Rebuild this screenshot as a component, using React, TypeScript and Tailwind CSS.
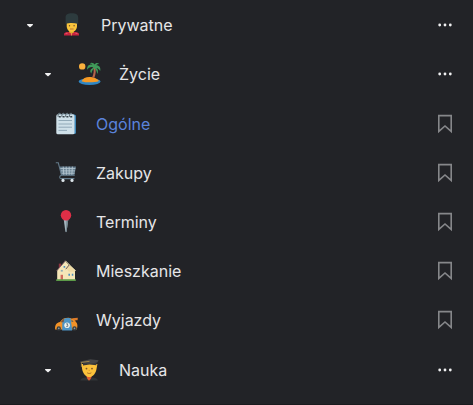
import { useState } from "react";
import type { ReactNode } from "react";

const GuardIcon = () => (
  <svg viewBox="0 0 24 24" className="h-6 w-6 shrink-0" aria-hidden="true">
    <path d="M5 22.5V21.2C5 19.6 7.5 18.8 12.3 18.8S20 19.6 20 21.2V22.5Z" fill="#c9243f" />
    <path d="M10.2 17H14.8V19.4L12.5 20.8L10.2 19.4Z" fill="#e0ac2c" />
    <path d="M7.7 9H18V13C18 16.4 15.8 18.9 12.8 18.9S7.7 16.4 7.7 13Z" fill="#f9c43c" />
    <path d="M6.6 11V4.6C6.6 1.4 8.8.2 12.8.2S19.2 1.4 19.2 4.6V11C17 10.2 15 9.9 12.8 9.9S8.2 10.2 6.6 11Z" fill="#2d3b3e" />
    <circle cx="10.5" cy="12.7" r=".7" fill="#6b4a2a" />
    <circle cx="15.1" cy="12.7" r=".7" fill="#6b4a2a" />
    <path d="M11 16H14.6" stroke="#a8663a" strokeWidth=".8" />
    <path d="M12.5 20.2V22.5" stroke="#e9b04a" strokeWidth=".8" />
    <path d="M6.5 20.4H8.5M16.5 20.4H18.5" stroke="#ec7180" strokeWidth=".7" />
  </svg>
);

const IslandIcon = () => (
  <svg viewBox="0 0 24 24" className="h-6 w-6 shrink-0" aria-hidden="true">
    <circle cx="5.2" cy="4.4" r="3.2" fill="#fbb03d" />
    <ellipse cx="12.6" cy="19.6" rx="11" ry="3.4" fill="#2f86c4" />
    <path d="M4.5 19.2C6 16.2 9 14.7 13 14.9C17.2 15 20.6 16.5 22 18.9C17 20.7 9.5 20.9 4.5 19.2Z" fill="#f79a24" />
    <path d="M15.1 15.5C16.8 12 17.2 8.4 16.2 5L18 4.6C19.3 8.6 18.8 12.2 17.4 15.7Z" fill="#b5654a" />
    <path d="M16.9 5.6C14.5 4.2 12 4.8 10.2 7.8C9.6 4 12.2 1.8 15.4 2.6C14.6 1.7 13.6 1.3 12.6 1.2C15 .1 16.8.8 17.5 2.6C18.6.5 20.9.5 22.2 2.1C20.8 2 19.8 2.4 19.2 3.2C22.3 3.2 24 5.5 23.2 8.9C22.1 7.2 20.9 6.4 19.4 6.1C21.2 7.8 21.5 10 20.2 12C19.9 9.2 18.9 7.4 17.4 6.3C16 7.4 14.9 8.8 14.3 11.6C12.3 9.2 13.4 6.9 16.9 5.6Z" fill="#3f9a59" />
  </svg>
);

const NotepadIcon = () => (
  <svg viewBox="0 0 24 24" className="h-6 w-6 shrink-0" aria-hidden="true">
    <rect x="4" y="2.5" width="18" height="19.5" rx="1.6" fill="#3f87b6" />
    <rect x="2.3" y="2.3" width="18.2" height="20" rx="1.6" fill="#cfe0e9" />
    <path d="M4.5 8.5H18M4.5 12H18M4.5 15.2H18M4.5 18.4H13" stroke="#8aa3b2" strokeWidth=".9" />
    <path
      d="M4.2 4.8C3.4 2 5.6.2 6.4 2M8 4.8C7.2 2 9.4.2 10.2 2M11.8 4.8C11 2 13.2.2 14 2M15.6 4.8C14.8 2 17 .2 17.8 2"
      fill="none"
      stroke="#65757e"
      strokeWidth="1.1"
    />
    <path d="M4.8 4.7H6.8M8.6 4.7H10.6M12.4 4.7H14.4M16.2 4.7H18.2" stroke="#3b474e" strokeWidth="1.4" />
  </svg>
);

const CartIcon = () => (
  <svg viewBox="0 0 24 24" className="h-6 w-6 shrink-0" aria-hidden="true">
    <path d="M5.4 5.5H22L20.4 14.2H7.2Z" fill="#627a8c" />
    <path
      d="M6 7.6H21.4M6.5 9.9H21M7 12.2H20.6M9.2 5.6L9.8 14M12.2 5.6L12.4 14M15.2 5.6V14M18.4 5.6L17.8 14"
      stroke="#b6c6d1"
      strokeWidth=".9"
    />
    <path
      d="M2.2 1.8H4.3L7.5 14.3H20.3M7.5 14.3C5.2 14.9 5 17.4 7.2 17.6H20"
      fill="none"
      stroke="#647b8b"
      strokeWidth="1.1"
      strokeLinecap="round"
    />
    <circle cx="9" cy="19.4" r="1.6" fill="#dbe4e9" />
    <circle cx="18" cy="19.4" r="1.6" fill="#dbe4e9" />
  </svg>
);

const PinIcon = () => (
  <svg viewBox="0 0 24 24" className="h-6 w-6 shrink-0" aria-hidden="true">
    <path d="M9.7 9.5H14.3L12.6 21.4L12 22.2L11.4 21.4Z" fill="#a3b4bd" />
    <path d="M12.5 9.5H14.3L12.6 21.4L12 22.2Z" fill="#71848c" />
    <circle cx="12" cy="5.2" r="5.2" fill="#df2f47" />
  </svg>
);

const HouseIcon = () => (
  <svg viewBox="0 0 24 24" className="h-6 w-6 shrink-0" aria-hidden="true">
    <rect x="4.8" y="4.6" width="2.2" height="5" fill="#8e3540" />
    <path d="M3.2 11.4L11.2 2.2L15.4 6.4L21 11V21H3.2Z" fill="#f5e6b8" />
    <path d="M15.4 6.2L21.4 11.6L20.8 12.8H14.8L12.6 9.8Z" fill="#efdaa4" />
    <path d="M2.6 11.9L11.4 1.8" fill="none" stroke="#84606a" strokeWidth=".8" />
    <path d="M15.2 5.9L11.8 10.2" fill="none" stroke="#6f5a58" strokeWidth="1" />
    <path d="M11.4 1.8L21.6 12" stroke="#efe3b4" strokeWidth="1" />
    <path d="M6.6 15.8H9V21H6.6Z" fill="#cf6a5c" />
    <path d="M9.6 7H11.2V8.8H9.6ZM14.4 14.8H16V16.8H14.4ZM17.8 14.8H19.3V16.8H17.8Z" fill="#4d8fbd" />
    <path d="M6.8 10.9H8.8V12.6H6.8Z" fill="#8cabb4" />
    <rect x="2" y="20.2" width="20" height="1.9" rx=".8" fill="#5c9a48" />
  </svg>
);

const CarIcon = () => (
  <svg viewBox="0 0 24 24" className="h-6 w-6 shrink-0" aria-hidden="true">
    <path d="M18.2 10.2L23.8 9.8L23.6 12.2H21.2L22 15H18.2Z" fill="#dc7a2a" />
    <path d="M1.1 21.6C.7 16.3 3 14.6 6 14C8.4 10.2 12 9.6 15.7 9.9C18.5 10.2 20 11.8 21.4 13.7C23.8 14.8 23.8 18.5 22.8 21.4Z" fill="#f29227" />
    <path d="M9.4 11.4C11 10 14.3 9.6 16.7 10.4L18.2 22.4H8.1L8.3 14.4Z" fill="#4d94c5" />
    <path d="M6.8 14.2C8 12 9 11.4 10.2 11L9.6 14.3Z" fill="#7a5840" />
    <path d="M17.2 11.5C18.4 12 19 12.8 19.6 13.9L17.6 14.1Z" fill="#6a6a5e" />
    <circle cx="4.8" cy="20.4" r="2.2" fill="#3a3f40" />
    <circle cx="20.5" cy="20.4" r="2.2" fill="#3a3f40" />
    <circle cx="4.8" cy="20.4" r=".8" fill="#8d9ba0" />
    <circle cx="20.5" cy="20.4" r=".8" fill="#8d9ba0" />
    <circle cx="13.1" cy="17.2" r="2.8" fill="#edf1ee" />
    <path d="M12 15.9H14L13 17.2C14.8 17.2 14.4 19 12.1 18.6" fill="none" stroke="#4b626d" strokeWidth=".7" />
  </svg>
);

const StudentIcon = () => (
  <svg viewBox="0 0 24 24" className="h-6 w-6 shrink-0" aria-hidden="true">
    <path d="M3.3 22.6C3.7 20.2 7 19.2 12 19.2S20.5 20.2 20.9 22.6Z" fill="#303437" />
    <path d="M9.3 17.7H15L13.7 21L12 22.8L10.4 21Z" fill="#df5f32" />
    <path d="M4.4 6H20.4L19.4 11.4C18.9 14.5 16.3 19 12.3 19S5.8 14.5 5.2 11.4Z" fill="#fbc13b" />
    <path d="M6 7.4L12.4 6.6L19.4 7.2V4.6H6Z" fill="#37383a" />
    <path d="M3.1 3.6L13.4 1.2L21.6 2.3L20.3 4.4L12.2 5.8L3.1 4.8Z" fill="#454648" />
    <path d="M12.5 3.3L4.4 4.4V8.8" fill="none" stroke="#b4934a" strokeWidth=".8" />
    <circle cx="9.5" cy="10.6" r=".9" fill="#7c5529" />
    <circle cx="15" cy="10.6" r=".9" fill="#7c5529" />
    <path d="M10.2 14.8C11.4 15.7 13.1 15.7 14.3 14.8" fill="none" stroke="#9c6226" strokeWidth=".9" />
    <path d="M12.2 11.8V13" stroke="#da9328" strokeWidth=".9" />
  </svg>
);

type FolderRowProps = {
  label: string;
  icon: ReactNode;
  open: boolean;
  onToggle: () => void;
  nested?: boolean;
};

const FolderRow = ({ label, icon, open, onToggle, nested }: FolderRowProps) => (
  <div className={`flex h-[49px] items-center pr-5 ${nested ? "pl-[42px]" : "pl-6"}`}>
    <button
      type="button"
      aria-label={`${open ? "Zwiń" : "Rozwiń"} ${label}`}
      aria-expanded={open}
      onClick={onToggle}
      className="mr-[23px] flex h-6 w-3 items-center justify-center"
    >
      <svg viewBox="0 0 12 12" className="h-3 w-3" fill="#f1f1f2" aria-hidden="true">
        <path d="M3.5 5H8.5Q9.4 5.1 8.8 5.9L6.6 8.1Q6 8.6 5.4 8.1L3.2 5.9Q2.6 5.1 3.5 5Z" />
      </svg>
    </button>
    {icon}
    <a href="#" className="ml-[18px] flex-1 truncate text-[#e6e6e8]">
      {label}
    </a>
    <button type="button" aria-label={`Opcje: ${label}`} className="flex h-6 w-4 items-center justify-center">
      <svg viewBox="0 0 16 16" className="h-4 w-4" fill="#f1f1f2" aria-hidden="true">
        <circle cx="2.7" cy="8" r="1.4" />
        <circle cx="8" cy="8" r="1.4" />
        <circle cx="13.3" cy="8" r="1.4" />
      </svg>
    </button>
  </div>
);

type NoteRowProps = {
  label: string;
  icon: ReactNode;
  active: boolean;
  onSelect: () => void;
};

const NoteRow = ({ label, icon, active, onSelect }: NoteRowProps) => (
  <li className="flex h-[49px] items-center pl-[54px] pr-5">
    {icon}
    <a
      href="#"
      onClick={onSelect}
      aria-current={active ? "page" : undefined}
      className={`ml-[18px] flex-1 truncate ${active ? "text-[#5b83dc]" : "text-[#e6e6e8]"}`}
    >
      {label}
    </a>
    <button type="button" aria-label={`Dodaj zakładkę: ${label}`} className="flex h-6 w-4 items-center justify-center">
      <svg viewBox="0 0 16 20" className="h-5 w-4" fill="none" stroke="#86878a" strokeWidth="1.6" aria-hidden="true">
        <path d="M1.8 1.6H14.2V17.4L8 12L1.8 17.4Z" />
      </svg>
    </button>
  </li>
);

const notes = [
  { label: "Ogólne", icon: <NotepadIcon /> },
  { label: "Zakupy", icon: <CartIcon /> },
  { label: "Terminy", icon: <PinIcon /> },
  { label: "Mieszkanie", icon: <HouseIcon /> },
  { label: "Wyjazdy", icon: <CarIcon /> },
];

const App = () => {
  const [rootOpen, setRootOpen] = useState(true);
  const [lifeOpen, setLifeOpen] = useState(true);
  const [studyOpen, setStudyOpen] = useState(true);
  const [selected, setSelected] = useState("Ogólne");

  return (
    <nav
      aria-label="Notatki"
      className="min-h-screen border-b border-[#1a1b1e] bg-[#222327] font-['Inter',sans-serif] text-base leading-6"
    >
      <FolderRow label="Prywatne" icon={<GuardIcon />} open={rootOpen} onToggle={() => setRootOpen(!rootOpen)} />
      {rootOpen && (
        <>
          <FolderRow label="Życie" icon={<IslandIcon />} open={lifeOpen} onToggle={() => setLifeOpen(!lifeOpen)} nested />
          {lifeOpen && (
            <ul className="py-px">
              {notes.map((note) => (
                <NoteRow
                  key={note.label}
                  label={note.label}
                  icon={note.icon}
                  active={selected === note.label}
                  onSelect={() => setSelected(note.label)}
                />
              ))}
            </ul>
          )}
          <FolderRow label="Nauka" icon={<StudentIcon />} open={studyOpen} onToggle={() => setStudyOpen(!studyOpen)} nested />
        </>
      )}
    </nav>
  );
};

export default App;
